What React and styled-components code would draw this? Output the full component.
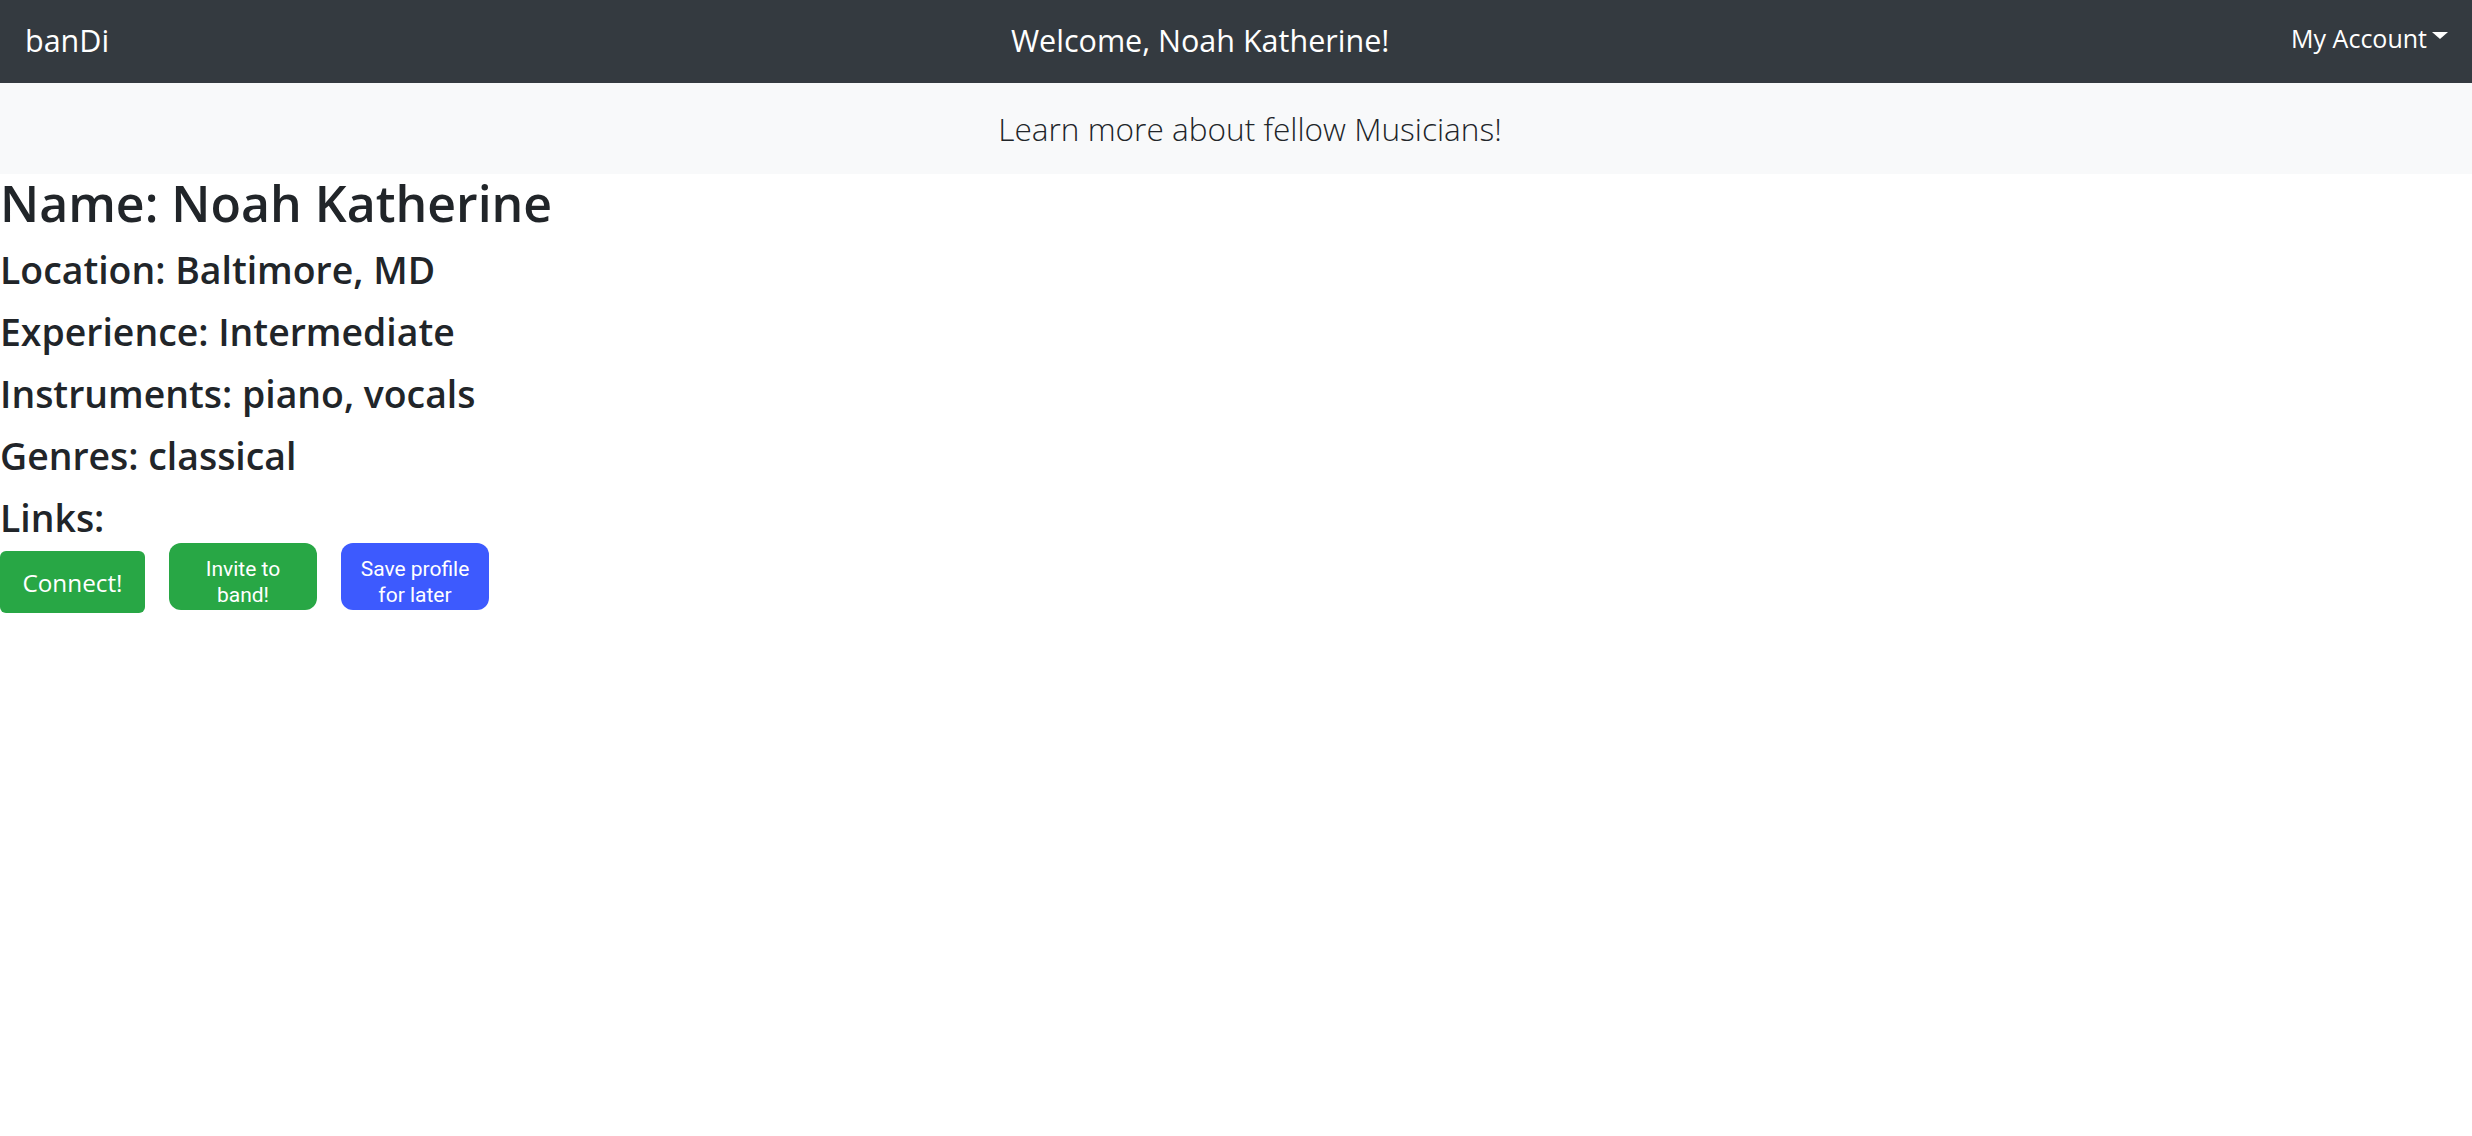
import React from 'react';
import styled, { createGlobalStyle } from 'styled-components';

const GlobalStyle = createGlobalStyle`
  body {
    margin: 0;
    font-family: "Open Sans", "Noto Sans", sans-serif;
    color: #212529;
    background: #fff;
  }
`;

const Navbar = styled.nav`
  display: flex;
  align-items: center;
  height: 83px;
  padding: 0 24px 4px 25px;
  box-sizing: border-box;
  background-color: #343a40;
  color: #fff;
`;

const Brand = styled.span`
  font-size: 30.5px;
`;

const Welcome = styled.span`
  flex: 1;
  text-align: center;
  font-size: 30.5px;
`;

const AccountToggle = styled.span`
  display: flex;
  align-items: center;
  margin-bottom: 4px;
  font-size: 25px;

  &::after {
    content: '';
    margin-left: 5px;
    margin-top: -4px;
    border-top: 7px solid #fff;
    border-left: 8px solid transparent;
    border-right: 8px solid transparent;
  }
`;

const Jumbo = styled.div`
  display: flex;
  align-items: center;
  justify-content: center;
  height: 91px;
  padding-left: 28px;
  background-color: #f8f9fa;
  font-size: 31.6px;
  font-weight: 300;
`;

const Profile = styled.section`
  display: flex;
  flex-direction: column;
  align-items: flex-start;
  padding-top: 2px;
`;

const Name = styled.h2`
  margin: 0 0 15px;
  font-size: 50px;
  line-height: 54px;
  font-weight: 600;
`;

const Field = styled.h3`
  margin: 0 0 12px;
  font-size: 37.4px;
  line-height: 50px;
  font-weight: 600;

  &:last-of-type {
    margin-bottom: 0;
  }
`;

const ButtonRow = styled.div`
  display: flex;
  align-items: flex-start;
  gap: 24px;
`;

const Button = styled.button`
  border: none;
  color: #fff;
  cursor: pointer;
  background-color: ${(p) => (p.$tone === 'blue' ? '#3d5afe' : '#28a745')};
`;

const ConnectButton = styled(Button)`
  width: 145px;
  height: 62px;
  margin-top: 8px;
  padding: 0;
  border-radius: 6px;
  font-family: "Open Sans", sans-serif;
  font-size: 24.3px;
`;

const PillButton = styled(Button)`
  width: 148px;
  height: 67px;
  padding: 13px 12px 2px;
  border-radius: 12px;
  font-family: Roboto, sans-serif;
  font-size: 21px;
  line-height: 26px;
`;

export default function App() {
  return (
    <>
      <GlobalStyle />
      <Navbar>
        <Brand>banDi</Brand>
        <Welcome>Welcome, Noah Katherine!</Welcome>
        <AccountToggle>My Account</AccountToggle>
      </Navbar>
      <Jumbo>Learn more about fellow Musicians!</Jumbo>
      <Profile>
        <Name>Name: Noah Katherine</Name>
        <Field>Location: Baltimore, MD</Field>
        <Field>Experience: Intermediate</Field>
        <Field>Instruments: piano, vocals</Field>
        <Field>Genres: classical</Field>
        <Field>Links:</Field>
        <ButtonRow>
          <ConnectButton>Connect!</ConnectButton>
          <PillButton>Invite to band!</PillButton>
          <PillButton $tone="blue">Save profile for later</PillButton>
        </ButtonRow>
      </Profile>
    </>
  );
}
